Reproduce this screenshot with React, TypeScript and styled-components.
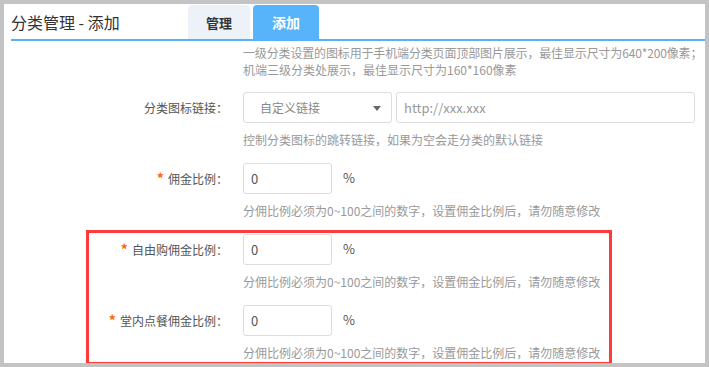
import React from 'react';
import styled, { createGlobalStyle } from 'styled-components';

const GlobalStyle = createGlobalStyle`
  html, body {
    margin: 0;
    padding: 0;
    background: #c3c3c3;
  }
  body {
    font-family: "Noto Sans CJK SC", "Noto Sans", "Liberation Sans", sans-serif;
  }
  * {
    box-sizing: border-box;
  }
`;

const Frame = styled.div`
  width: 709px;
  height: 367px;
  padding: 4px;
`;

const Panel = styled.div`
  width: 100%;
  height: 100%;
  background: #ffffff;
  overflow: hidden;
`;

const Header = styled.div`
  display: flex;
  height: 37px;
  margin-left: 7px;
  border-bottom: 2px solid #56b1f8;
`;

const Title = styled.h2`
  flex-shrink: 0;
  width: 177px;
  margin: 0;
  align-self: center;
  font-size: 16px;
  font-weight: normal;
  color: #333;
  line-height: 20px;
`;

const Tabs = styled.div`
  display: flex;
  gap: 3px;
  align-self: flex-end;
`;

const Tab = styled.div<{ $active?: boolean }>`
  height: 34px;
  padding: 0 ${(p) => (p.$active ? '19px' : '18px')};
  display: flex;
  align-items: center;
  border-radius: 4px 4px 0 0;
  background: ${(p) => (p.$active ? '#57b4fb' : '#edf1f8')};
  color: ${(p) => (p.$active ? '#ffffff' : '#333')};
  font-size: ${(p) => (p.$active ? '14px' : '13px')};
  font-weight: bold;
`;

const Description = styled.div`
  margin-top: 3px;
  padding-left: 239px;
  font-size: 12px;
  line-height: 17px;
  color: #999;
  white-space: nowrap;
`;

const DescLine = styled.div<{ $tight?: boolean }>`
  letter-spacing: ${(p) => (p.$tight ? '-0.15px' : '0')};
`;

const Form = styled.div`
  margin-top: 14px;
  display: flex;
  flex-direction: column;
  gap: 15px;
`;

// red annotation frame drawn over the two highlighted rows
const Highlight = styled.div`
  position: relative;
  display: flex;
  flex-direction: column;
  gap: 15px;

  &::before {
    content: '';
    box-sizing: border-box;
    position: absolute;
    left: 82px;
    top: -4px;
    bottom: -4px;
    width: 526px;
    border: 3px solid #fd3b3b;
    pointer-events: none;
  }
`;

const Row = styled.div`
  display: grid;
  grid-template-columns: 224px 1fr;
  column-gap: 15px;
`;

const Label = styled.label`
  height: 31px;
  line-height: 31px;
  text-align: right;
  font-size: 12px;
  color: #555;
  white-space: nowrap;
`;

const Star = styled.span`
  color: #ff6600;
  font-size: 14px;
  font-weight: bold;
  margin-right: 4px;
`;

const Controls = styled.div`
  display: flex;
  align-items: center;
  gap: 4px;
`;

const Select = styled.div`
  position: relative;
  width: 149px;
  height: 31px;
  padding-left: 16px;
  display: flex;
  align-items: center;
  border: 1px solid #ddd;
  border-radius: 3px;
  font-size: 12px;
  color: #888;
`;

const Caret = styled.span`
  position: absolute;
  right: 10px;
  top: 13px;
  border-left: 4px solid transparent;
  border-right: 4px solid transparent;
  border-top: 5px solid #666;
`;

const Input = styled.input<{ $width: number }>`
  width: ${(p) => p.$width}px;
  height: 31px;
  padding: 0 7px;
  border: 1px solid #ddd;
  border-radius: 3px;
  font-family: inherit;
  font-size: 13px;
  color: #555;
  outline: none;

  &::placeholder {
    color: #999;
  }
`;

const Percent = styled.span`
  margin-left: 7px;
  margin-top: -2px;
  font-size: 13px;
  color: #555;
`;

const Help = styled.div`
  grid-column: 2;
  margin-top: 8px;
  font-size: 12px;
  line-height: 17px;
  color: #999;
  white-space: nowrap;
`;

const RATIO_HELP = '分佣比例必须为0~100之间的数字，设置佣金比例后，请勿随意修改';

const RatioRow: React.FC<{ label: string }> = ({ label }) => (
  <Row>
    <Label>
      <Star>*</Star>
      {label}：
    </Label>
    <Controls>
      <Input $width={89} defaultValue="0" readOnly />
      <Percent>%</Percent>
    </Controls>
    <Help>{RATIO_HELP}</Help>
  </Row>
);

export default function App() {
  return (
    <>
      <GlobalStyle />
      <Frame>
        <Panel>
          <Header>
            <Title>分类管理 - 添加</Title>
            <Tabs>
              <Tab>管理</Tab>
              <Tab $active>添加</Tab>
            </Tabs>
          </Header>

          <Description>
            <DescLine $tight>一级分类设置的图标用于手机端分类页面顶部图片展示，最佳显示尺寸为640*200像素；</DescLine>
            <DescLine>机端三级分类处展示，最佳显示尺寸为160*160像素</DescLine>
          </Description>

          <Form>
            <Row>
              <Label>分类图标链接：</Label>
              <Controls>
                <Select>
                  自定义链接
                  <Caret />
                </Select>
                <Input $width={299} placeholder="http://xxx.xxx" readOnly />
              </Controls>
              <Help>控制分类图标的跳转链接，如果为空会走分类的默认链接</Help>
            </Row>

            <RatioRow label="佣金比例" />

            <Highlight>
              <RatioRow label="自由购佣金比例" />
              <RatioRow label="堂内点餐佣金比例" />
            </Highlight>
          </Form>
        </Panel>
      </Frame>
    </>
  );
}
